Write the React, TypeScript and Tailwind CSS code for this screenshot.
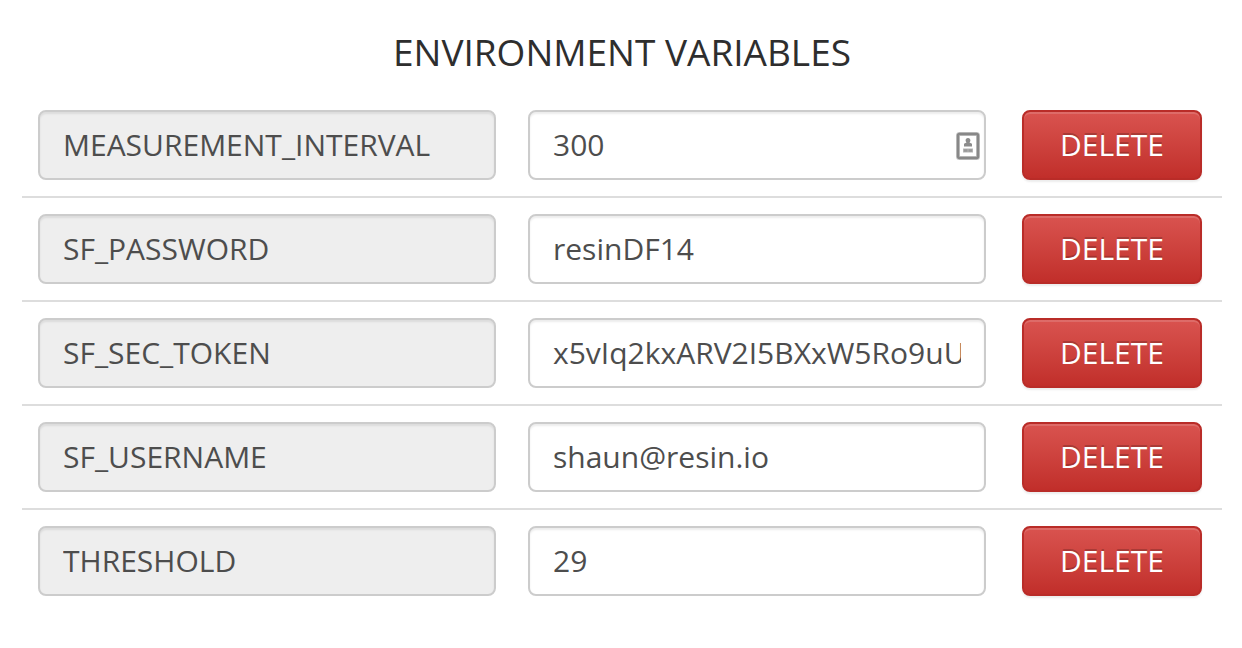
const VARIABLES = [
  { name: "MEASUREMENT_INTERVAL", value: "300", contact: true },
  { name: "SF_PASSWORD", value: "resinDF14" },
  { name: "SF_SEC_TOKEN", value: "x5vIq2kxARV2I5BXxW5Ro9uU7t" },
  { name: "SF_USERNAME", value: "shaun@resin.io" },
  { name: "THRESHOLD", value: "29" },
];

const FIELD =
  "block h-[70px] w-full min-w-0 rounded-lg border-2 border-[#cccccc] px-[23px] pb-[2px] text-[30px] text-[#4d4d4d] shadow-[inset_0_2px_2px_rgba(0,0,0,0.075)]";

function ContactIcon() {
  return (
    <svg
      aria-hidden="true"
      viewBox="0 0 24 28"
      className="pointer-events-none absolute top-[22px] right-[6px] h-7 w-6"
    >
      <rect x="2" y="2" width="20" height="24" rx="1.5" fill="#fff" stroke="#c4c4c4" strokeWidth="4" />
      <rect x="2" y="2" width="20" height="24" rx="1.5" fill="none" stroke="#888888" strokeWidth="2.4" />
      <path d="M12 6c1.6 0 2.4 1 2.4 2.3 0 1-.4 1.5-.9 2.1l2.5 1.4v2.6H8v-2.6l2.5-1.4c-.5-.6-.9-1.1-.9-2.1C9.6 7 10.400 6 12 6z" fill="#8c8c8c" />
      <path d="M7 18.5h10" stroke="#b5b5b5" strokeWidth="4" />
      <path d="M8 18.5h3.5M12.5 18.5H16" stroke="#999999" strokeWidth="2.4" />
    </svg>
  );
}

export default function App() {
  return (
    <main className="bg-white pt-7 pr-5 pl-[22px] font-['Open_Sans',sans-serif]">
      <h1 className="text-center text-[37px] leading-[48px] text-[#2e2e2e]">ENVIRONMENT VARIABLES</h1>
      <ul className="mt-[18px]">
        {VARIABLES.map((item) => (
          <li
            key={item.name}
            className="grid grid-cols-[1fr_1fr_184px] gap-x-8 border-b-2 border-[#dddddd] py-4 pr-5 pl-4 last:border-b-0"
          >
            <input aria-label="Name" readOnly defaultValue={item.name} className={`${FIELD} bg-[#eeeeee]`} />
            <div className="relative">
              <input aria-label={`${item.name} value`} defaultValue={item.value} className={`${FIELD} bg-white`} />
              {item.contact && <ContactIcon />}
            </div>
            <button
              type="button"
              className="ml-1 h-[70px] rounded-lg border-2 border-[#b92c28] bg-linear-to-b from-[#d9534f] to-[#c12e2a] pb-[2px] text-[30px] text-white shadow-[inset_0_2px_0_rgba(255,255,255,0.15),0_2px_2px_rgba(0,0,0,0.075)] text-shadow-[0_-2px_0_rgba(0,0,0,0.2)]"
            >
              DELETE
            </button>
          </li>
        ))}
      </ul>
    </main>
  );
}
